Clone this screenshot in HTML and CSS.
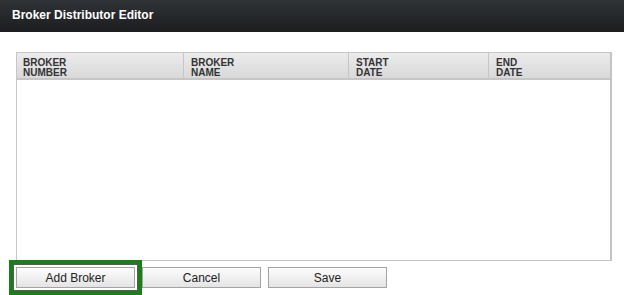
FILE: index.html
```html
<!DOCTYPE html>
<html lang="en">
<head>
  <meta charset="UTF-8">
  <title>Broker Distributor Editor</title>
  <link rel="stylesheet" href="styles.css">
</head>
<body>

  <div class="titlebar">Broker Distributor Editor</div>

  <div class="editor">
    <div class="grid">
      <div class="grid-head">
        <div class="col col-number">BROKER<br>NUMBER</div>
        <div class="col col-name">BROKER<br>NAME</div>
        <div class="col col-start">START<br>DATE</div>
        <div class="col col-end">END<br>DATE</div>
      </div>
      <div class="grid-body"></div>
    </div>

    <div class="actions">
      <button type="button" class="btn btn-highlight">Add Broker</button>
      <button type="button" class="btn">Cancel</button>
      <button type="button" class="btn">Save</button>
    </div>
  </div>

</body>
</html>
```

FILE: styles.css
```css
* {
  box-sizing: border-box;
  margin: 0;
  padding: 0;
  font-family: "Liberation Sans", Arial, sans-serif;
}

html, body {
  overflow: hidden;
}

body {
  background: #fff;
  width: 624px;
  height: 295px;
}

.titlebar {
  height: 32px;
  padding: 7px 12px 0;
  background: linear-gradient(#303336, #1b1d1f);
  color: #fff;
  font-size: 12px;
  font-weight: bold;
  line-height: 16px;
}

.editor {
  padding: 20px 12px 0 16px;
}

.grid {
  border: 1px solid #c6c6c6;
  border-right: 2px solid #c3c3c3;
}

.grid-head {
  display: flex;
  height: 27px;
  background: linear-gradient(#ebebeb, #d9d9d9);
  border-bottom: 2px solid #c6c6c6;
}

.col {
  padding: 5px 0 0 6px;
  font-size: 10px;
  font-weight: bold;
  line-height: 10px;
  color: #333;
  border-right: 1px solid #c6c6c6;
}

.col-number { width: 167px; }
.col-name   { width: 165px; padding-left: 7px; }
.col-start  { width: 140px; padding-left: 7px; }
.col-end    { flex: 1; border-right: none; padding-left: 7px; }

.grid-body {
  height: 180px;
  background: #fff;
}

.actions {
  display: flex;
  gap: 7px;
  padding-top: 6px;
}

.btn {
  width: 119px;
  height: 21px;
  border: 1px solid #a3a3a3;
  background: linear-gradient(#fdfdfd, #e4e4e4);
  color: #222;
  font-size: 12px;
  cursor: pointer;
}

.btn-highlight {
  box-shadow: 0 0 0 2px #fff, 0 0 0 3px #5a5a5a;
  outline: 4px solid #1a7f1a;
  outline-offset: 3px;
}
```
